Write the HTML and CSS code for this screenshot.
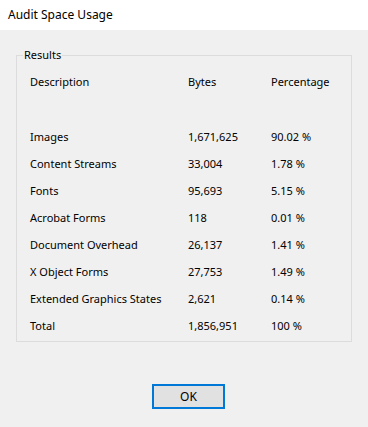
FILE: index.html
```html
<!DOCTYPE html>
<html>

<head>
	<meta charset="utf-8" />
	<title>Audit Space Usage</title>
	<link rel="stylesheet" href="styles.css">
</head>

<body>
	<div class="titlebar">Audit Space Usage</div>
	<div class="content">
		<fieldset class="group">
			<legend>Results</legend>
			<div class="grid">
				<div class="row">
					<span>Description</span><span>Bytes</span><span>Percentage</span>
				</div>
				<div class="row blank"></div>
				<div class="row">
					<span>Images</span><span>1,671,625</span><span>90.02 %</span>
				</div>
				<div class="row">
					<span>Content Streams</span><span>33,004</span><span>1.78 %</span>
				</div>
				<div class="row">
					<span>Fonts</span><span>95,693</span><span>5.15 %</span>
				</div>
				<div class="row">
					<span>Acrobat Forms</span><span>118</span><span>0.01 %</span>
				</div>
				<div class="row">
					<span>Document Overhead</span><span>26,137</span><span>1.41 %</span>
				</div>
				<div class="row">
					<span>X Object Forms</span><span>27,753</span><span>1.49 %</span>
				</div>
				<div class="row">
					<span>Extended Graphics States</span><span>2,621</span><span>0.14 %</span>
				</div>
				<div class="row">
					<span>Total</span><span>1,856,951</span><span>100 %</span>
				</div>
			</div>
		</fieldset>
		<div class="buttons">
			<button class="ok">OK</button>
		</div>
	</div>
</body>

</html>
```

FILE: styles.css
```css
* {
	margin: 0px;
	padding: 0px;
	box-sizing: border-box;
}

html,
body {
	width: 368px;
	height: 427px;
	background-color: #f0f0f0;
	font-family: "Noto Sans", "Open Sans", sans-serif;
	font-size: 11px;
	color: #000;
	overflow: hidden;
}

.titlebar {
	height: 30px;
	background-color: #fff;
	padding-left: 8px;
	line-height: 30px;
	font-size: 12px;
}

.content {
	padding-top: 19px;
}

.group {
	margin: 0 16px;
	border: 1px solid #dcdcdc;
	padding: 7px 0 2px 6px;
}

.group legend {
	margin-left: 0px;
	padding: 0 1px;
	line-height: 12px;
}

.grid {
	padding-left: 7px;
}

.row {
	display: grid;
	grid-template-columns: 158px 83px 1fr;
	height: 27px;
	line-height: 27px;
	white-space: nowrap;
}

.row.blank {
	height: 28px;
}

.buttons {
	padding-top: 42px;
	padding-left: 152px;
}

.ok {
	width: 73px;
	height: 25px;
	border: 2px solid #0078d7;
	background-color: #e1e1e1;
	font-family: inherit;
	font-size: 12px;
	color: #000;
}
```
